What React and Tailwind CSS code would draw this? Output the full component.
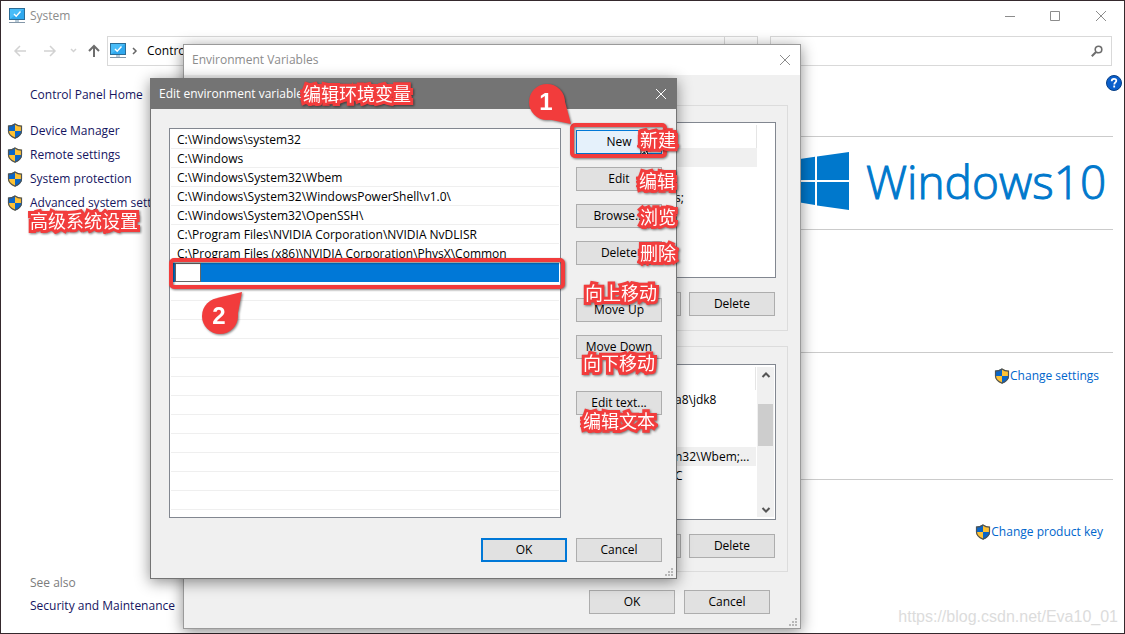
import React from 'react';

const shadowWin = 'shadow-[0_3px_14px_rgba(0,0,0,0.45)]';

const paths = [
  'C:\\Windows\\system32',
  'C:\\Windows',
  'C:\\Windows\\System32\\Wbem',
  'C:\\Windows\\System32\\WindowsPowerShell\\v1.0\\',
  'C:\\Windows\\System32\\OpenSSH\\',
  'C:\\Program Files\\NVIDIA Corporation\\NVIDIA NvDLISR',
  'C:\\Program Files (x86)\\NVIDIA Corporation\\PhysX\\Common',
];

const tasks = ['Device Manager', 'Remote settings', 'System protection', 'Advanced system settings'];

function Shield() {
  return (
    <svg className="h-4 w-4 shrink-0" viewBox="0 0 16 16" aria-hidden="true">
      <path d="M8 .5C6 2 3.500 2.600 1 2.700V8c0 3.500 3 6 7 7.600C12 14 15 11.500 15 8V2.700C12.500 2.600 10 2 8 .500Z" fill="#ffc233" />
      <path d="M8 .5C6 2 3.500 2.600 1 2.700V8h7ZM8 8h7c0 3.500-3 6-7 7.600Z" fill="#0a66c8" />
      <path d="M8 .9C6 2.400 3.700 3 1.500 3.100V8c0 3.200 2.800 5.600 6.500 7.100C11.700 13.600 14.500 11.200 14.500 8V3.100C12.300 3 10 2.400 8 .900Z" fill="none" stroke="#4d5358" strokeWidth="1.200" />
    </svg>
  );
}

function Monitor() {
  return (
    <svg className="h-4 w-4 shrink-0" viewBox="0 0 16 16" aria-hidden="true">
      <rect x=".5" y=".5" width="15" height="11" fill="#2fa8ee" stroke="#2b6c96" />
      <path d="M1 1h14L1 11Z" fill="#49bcf8" />
      <path d="M5 6l2.200 2.300L11.500 3.500" fill="none" stroke="#fff" strokeWidth="1.400" />
      <path d="M6 12h4v2H6z" fill="#b9cbd8" />
      <path d="M0 14.500h16" stroke="#8497a8" />
    </svg>
  );
}

function CloseIcon() {
  return (
    <svg className="h-3 w-3" viewBox="0 0 12 12" aria-hidden="true">
      <path d="M1 1l10 10M11 1L1 11" stroke="currentColor" fill="none" />
    </svg>
  );
}

function Grip() {
  return (
    <svg className="absolute right-[3px] bottom-0.5 h-2 w-2" viewBox="0 0 8 8" fill="#b8b8b8" aria-hidden="true">
      <path d="M6 0h2v2H6zM3 3h2v2H3zM6 3h2v2H6zM0 6h2v2H0zM3 6h2v2H3zM6 6h2v2H6z" />
    </svg>
  );
}

function Button({ children, className = 'border border-[#adadad] bg-[#e1e1e1]' }) {
  return (
    <button type="button" className={`h-6 w-[86px] shrink-0 text-center leading-4 ${className}`}>
      {children}
    </button>
  );
}

// Red outlined caption laid over the windows
function Note({ children, className }) {
  return (
    <span
      className={`absolute z-30 whitespace-nowrap font-['Noto_Sans_CJK_SC',sans-serif] text-[18px] leading-[18px] text-white [-webkit-text-stroke:6px_#f23c3c] [paint-order:stroke_fill] drop-shadow-[1px_1px_1px_rgba(0,0,0,0.5)] ${className}`}
    >
      {children}
    </span>
  );
}

function SystemWindow() {
  return (
    <main className="absolute inset-px flex flex-col bg-white">
      <header className="flex h-[30px] items-center pl-2 text-[#8c8c8c]">
        <Monitor />
        <h1 className="ml-[5px] flex-1">System</h1>
        <button type="button" aria-label="Minimize" className="flex w-[45px] justify-center">
          <svg className="h-3 w-3" viewBox="0 0 12 12"><path d="M1 6.500h10" stroke="currentColor" /></svg>
        </button>
        <button type="button" aria-label="Maximize" className="flex w-[45px] justify-center">
          <svg className="h-3 w-3" viewBox="0 0 12 12"><path d="M1.500 1.500h9v9h-9z" stroke="currentColor" fill="none" /></svg>
        </button>
        <button type="button" aria-label="Close" className="flex w-[47px] justify-center"><CloseIcon /></button>
      </header>

      <nav className="mt-[5px] flex h-[30px] items-center pr-3">
        <div className="flex w-[106px] items-center pl-3">
          <svg className="h-4 w-[90px]" viewBox="0 0 90 16" fill="none" aria-hidden="true">
            <path d="M13 8H2M7 3L2 8l5 5" stroke="#d2d2d2" strokeWidth="1.500" />
            <path d="M31 8h11M37 3l5 5-5 5" stroke="#d2d2d2" strokeWidth="1.500" />
            <path d="M58 6l2.500 2.500L63 6" stroke="#d2d2d2" strokeWidth="1.500" />
            <path d="M81 14V3M76 8l5-5 5 5" stroke="#6d6d6d" strokeWidth="2" />
          </svg>
        </div>
        <div className="flex h-full w-[651px] items-center border border-[#d9d9d9] pl-0.5">
          <Monitor />
          <svg className="ml-[5px] h-2 w-2" viewBox="0 0 8 8"><path d="M2 1l3 3-3 3" stroke="#666" strokeWidth="1.500" fill="none" /></svg>
          <span className="ml-2 flex-1">Control Panel</span>
          <span className="h-full w-[33px] border-l border-[#d9d9d9]" />
        </div>
        <div className="ml-3 flex h-full flex-1 items-center border border-[#d9d9d9] pr-2">
          <input aria-label="Search" className="h-full min-w-0 flex-1 outline-none" />
          <svg className="h-3 w-3" viewBox="0 0 12 12" aria-hidden="true">
            <circle cx="7.500" cy="4.500" r="3.300" fill="none" stroke="#6d6d6d" strokeWidth="1.600" />
            <path d="M5 7L.800 11.200" stroke="#6d6d6d" strokeWidth="2" />
          </svg>
        </div>
      </nav>

      <div className="flex flex-1">
        <aside className="flex w-[200px] flex-col pl-1.5 text-[#15155f]">
          <a href="#home" className="mt-[17px] ml-[23px] leading-6">Control Panel Home</a>
          <ul className="mt-3">
            {tasks.map((t) => (
              <li key={t}>
                <a href="#task" className="flex h-6 items-center gap-[7px] whitespace-nowrap"><Shield />{t}</a>
              </li>
            ))}
          </ul>
          <div className="mt-auto mb-[15px] ml-[23px] flex flex-col">
            <span className="leading-[22px] text-[#7c7c7c]">See also</span>
            <a href="#security" className="leading-6 whitespace-nowrap">Security and Maintenance</a>
          </div>
        </aside>

        <section className="ml-auto flex w-[351px] flex-col pr-[11px] text-[#0066cc]">
          <button type="button" aria-label="Help" className="-mr-2.5 mt-2 h-[18px] w-[18px] self-end">
            <svg viewBox="0 0 18 18" aria-hidden="true">
              <circle cx="9" cy="9" r="7.500" fill="#0a5fcb" stroke="#073f86" />
              <path d="M6.700 7.200c0-3.200 4.600-3 4.600-.400 0 1.600-2 1.700-2 3.600M9.200 11.600v1.800" stroke="#fff" strokeWidth="1.800" fill="none" />
            </svg>
          </button>
          <div className="mt-11 flex h-[93px] items-center border-t border-[#cbcbcb] pb-1 text-[#0078cc]">
            <svg className="h-[58px] w-[76px] shrink-0" viewBox="0 0 76 58" fill="currentColor" aria-hidden="true">
              <path d="M0 11L42 4.700V28H0zM44 4.500L76 0v28H44zM0 30h42v23L0 46zM44 30h32v28l-32-4.500z" />
            </svg>
            <p className="ml-[17px] flex whitespace-nowrap font-['Open_Sans',sans-serif] text-[46px] font-light [-webkit-text-stroke:1px_#0078cc]">
              <span>Windows</span>
              <span>10</span>
            </p>
          </div>
          <div className="flex h-[123px] border-t border-[#cbcbcb]" />
          <div className="flex h-[127px] justify-end border-t border-[#cbcbcb] pt-[11px] pr-3.5">
            <a href="#settings" className="flex h-6 items-center"><Shield />Change settings</a>
          </div>
          <div className="flex justify-end border-t border-[#cbcbcb] pt-10 pr-2.5">
            <a href="#key" className="flex h-6 items-center"><Shield />Change product key</a>
          </div>
        </section>
      </div>
      <p className="absolute right-1.5 bottom-1 font-['Liberation_Sans',sans-serif] text-[16px] leading-6 text-[#dcdcdc]">https://blog.csdn.net/Eva10_01</p>
    </main>
  );
}

function VarGroup({ children, className }) {
  return (
    <div className={`flex h-[226px] flex-col border border-[#dcdcdc] px-[11px] ${className}`}>
      <div className="flex h-[156px] justify-end border border-[#828790] bg-white py-0.5 pr-px">{children}</div>
      <div className="mt-3.5 flex justify-end gap-2 pr-px">
        <Button>New...</Button>
        <Button>Edit...</Button>
        <Button>Delete</Button>
      </div>
    </div>
  );
}

function VariablesDialog() {
  return (
    <section className={`absolute top-11 left-[183px] z-10 flex h-[585px] w-[618px] flex-col border border-[#9a9a9a] bg-[#f0f0f0] ${shadowWin}`}>
      <header className="flex h-[30px] items-center justify-between bg-white pr-[9px] pl-2 text-[#8c8c8c]">
        <h2>Environment Variables</h2>
        <button type="button" aria-label="Close"><CloseIcon /></button>
      </header>
      <div className="mt-[30px] flex flex-col gap-[15px] px-3">
        <VarGroup className="pt-4">
          <div className="flex w-[100px] flex-col pr-[17px]">
            <div className="h-[23px] border-r border-[#e5e5e5]" />
            <div className="h-[19px] bg-[#f0f0f0]" />
            <p className="mt-4 pl-px leading-[30px]">s;</p>
          </div>
        </VarGroup>
        <VarGroup className="pt-[17px]">
          <div className="flex w-[82px] flex-col pr-px leading-[19px]">
            <div className="h-[23px] border-r border-[#e5e5e5]" />
            <p>a8\jdk8</p>
            <p className="mt-[38px] bg-[#f0f0f0]">n32\Wbem;...</p>
            <p>C</p>
          </div>
          <div className="flex w-[17px] flex-col items-center bg-[#f0f0f0] pt-0.5 pb-px">
            <svg className="h-3 w-3" viewBox="0 0 12 12"><path d="M2.500 8L6 4.500 9.500 8" stroke="#555" strokeWidth="2" fill="none" /></svg>
            <div className="mt-[23px] h-[42px] w-[15px] bg-[#cdcdcd]" />
            <svg className="mt-auto h-3 w-3" viewBox="0 0 12 12"><path d="M2.500 4L6 7.500 9.500 4" stroke="#555" strokeWidth="2" fill="none" /></svg>
          </div>
        </VarGroup>
      </div>
      <footer className="mt-[18px] flex justify-end gap-[9px] pr-[30px]">
        <Button>OK</Button>
        <Button>Cancel</Button>
      </footer>
      <Grip />
    </section>
  );
}

function EditDialog() {
  return (
    <section className={`absolute top-[78px] left-[150px] z-20 flex h-[501px] w-[527px] flex-col border border-[#747474] bg-[#f0f0f0] ${shadowWin}`}>
      <header className="flex h-[30px] items-center justify-between bg-[#747474] pr-[9px] pl-2 text-white">
        <h2>Edit environment variable</h2>
        <button type="button" aria-label="Close"><CloseIcon /></button>
      </header>
      <div className="mt-[19px] flex gap-[15px] pr-3.5 pl-[18px]">
        <ul className="h-[390px] flex-1 overflow-hidden border border-[#828790] bg-white p-px">
          {paths.map((p) => (
            <li key={p} className="h-[19px] border-b border-[#efefef] pl-1.5 leading-[19px] whitespace-nowrap">{p}</li>
          ))}
          <li className="flex h-[19px] bg-[#0078d7] pl-1">
            <input aria-label="New entry" className="w-[26px] border border-[#666] bg-white outline-none" />
          </li>
          {Array.from({ length: 12 }, (_, i) => (
            <li key={i} className="h-[19px] border-b border-[#efefef]" />
          ))}
        </ul>
        <div className="flex flex-col gap-[13px] pt-0.5">
          <Button className="border border-[#0078d7] bg-[#e5f1fb]">New</Button>
          <Button>Edit</Button>
          <Button>Browse...</Button>
          <Button>Delete</Button>
          <div className="mt-5 flex flex-col gap-[13px]">
            <Button>Move Up</Button>
            <Button>Move Down</Button>
          </div>
          <div className="mt-[19px]"><Button>Edit text...</Button></div>
        </div>
      </div>
      <footer className="mt-5 flex justify-end gap-[9px] pr-3.5">
        <Button className="border-2 border-[#0078d7] bg-[#e1e1e1]">OK</Button>
        <Button>Cancel</Button>
      </footer>
      <Grip />
    </section>
  );
}

function Annotations() {
  return (
    <>
      <svg className="absolute top-[140px] left-[640px] z-20 h-5 w-3" viewBox="0 0 12 20" aria-hidden="true">
        <path d="M1 1v14l3.500-3 2.200 5 2-1-2.200-5H11Z" fill="#fff" stroke="#000" />
      </svg>
      <div className="absolute top-[123px] left-[570px] z-20 h-[35px] w-[97px] rounded-[5px] border-4 border-[#f23c3c] drop-shadow-[1px_1px_1px_rgba(0,0,0,0.5)]" />
      <div className="absolute top-[258px] left-[169px] z-20 h-[31px] w-[396px] rounded-[5px] border-4 border-[#f23c3c] drop-shadow-[1px_1px_1px_rgba(0,0,0,0.5)]" />
      <Note className="top-[84px] left-[303px]">编辑环境变量</Note>
      <Note className="top-[211px] left-[30px]">高级系统设置</Note>
      <Note className="top-[130px] left-[640px]">新建</Note>
      <Note className="top-[171px] left-[639px]">编辑</Note>
      <Note className="top-[207px] left-[640px]">浏览</Note>
      <Note className="top-[243px] left-[640px]">删除</Note>
      <Note className="top-[283px] left-[585px]">向上移动</Note>
      <Note className="top-[353px] left-[583px]">向下移动</Note>
      <Note className="top-[411px] left-[583px]">编辑文本</Note>
      <svg className="absolute top-[82px] left-[527px] z-30 h-12 w-12 drop-shadow-[1px_1px_1px_rgba(0,0,0,0.5)]" viewBox="0 0 48 48" aria-hidden="true">
        <path d="M37 16L44 42L20 37Z" fill="#f23c3c" />
        <circle cx="20" cy="20" r="18" fill="#f23c3c" />
        <text x="19" y="28" textAnchor="middle" fill="#fff" fontFamily="Liberation Sans, sans-serif" fontWeight="700" fontSize="24">1</text>
      </svg>
      <svg className="absolute top-[290px] left-[200px] z-30 h-12 w-12 drop-shadow-[1px_1px_1px_rgba(0,0,0,0.5)]" viewBox="0 0 48 48" aria-hidden="true">
        <path d="M17 8L42 2L37 28Z" fill="#f23c3c" />
        <circle cx="20" cy="26" r="18" fill="#f23c3c" />
        <text x="19" y="34" textAnchor="middle" fill="#fff" fontFamily="Liberation Sans, sans-serif" fontWeight="700" fontSize="24">2</text>
      </svg>
    </>
  );
}

export default function App() {
  return (
    <div className="relative h-screen min-h-[634px] overflow-hidden bg-[#35292d] font-['Open_Sans',sans-serif] text-[12px] leading-4 text-black">
      <SystemWindow />
      <VariablesDialog />
      <EditDialog />
      <Annotations />
    </div>
  );
}
